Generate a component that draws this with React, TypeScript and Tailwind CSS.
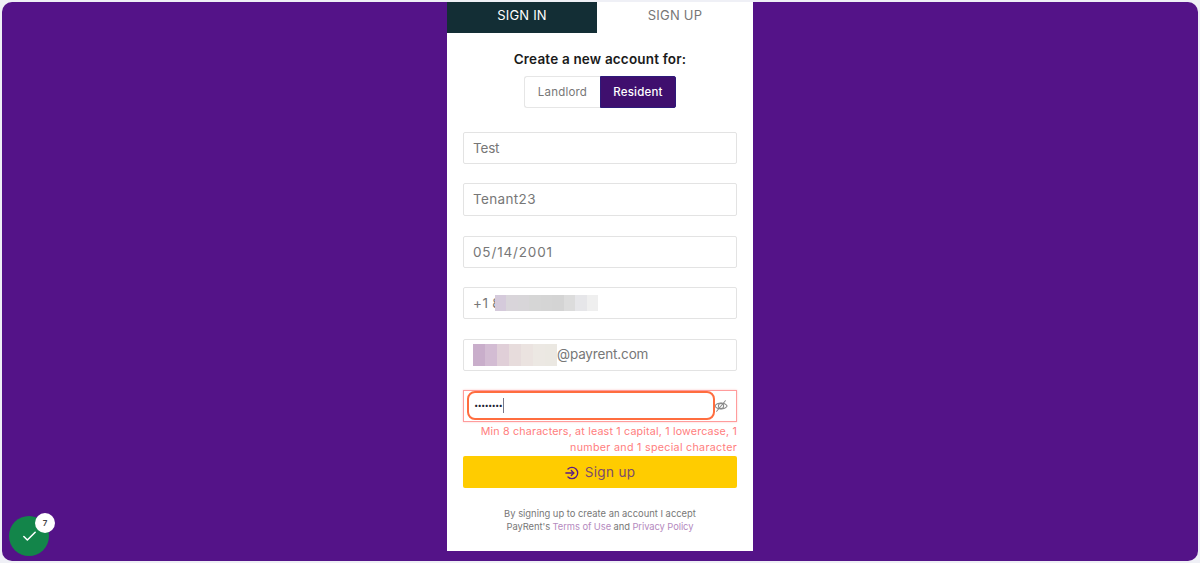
import { Check } from 'lucide-react'

const phoneBlur = ['#d5cadb', '#d9d5da', '#d8d6d9', '#d6d6d6', '#d5d5d5', '#d4d4d4', '#dcdcdc', '#e6e6e9', '#efefef']
const mailBlur = ['#c9aecb', '#d3bcd3', '#e0cfd8', '#e7dcdc', '#ebe3e0', '#ece8e3', '#ebe8e2']

function Field({ className = '', children }: { className?: string; children: React.ReactNode }) {
  return (
    <div className={`flex h-[32px] items-center rounded-[2px] border border-[#e3e3e3] px-[9px] text-[13.5px] text-[#777] ${className}`}>
      {children}
    </div>
  )
}

function SignInIcon() {
  return (
    <svg width="14" height="14" viewBox="0 0 16 16" fill="none" stroke="#5b1a88" strokeWidth="1.5" strokeLinecap="round" strokeLinejoin="round">
      <path d="M3.4 3.4A6.5 6.5 0 1 1 3.4 12.6" />
      <path d="M1 8h9" />
      <path d="M7.2 5.2 10 8l-2.8 2.8" />
    </svg>
  )
}

function EyeSlashIcon() {
  return (
    <svg width="14" height="14" viewBox="0 0 16 16" fill="none" stroke="#8a8a8a" strokeWidth="1.2" strokeLinecap="round">
      <path d="M1 8C4 3.4 12 3.4 15 8C12 12.6 4 12.6 1 8Z" />
      <circle cx="8" cy="8" r="3" />
      <path d="M3 14 13 2" />
    </svg>
  )
}

export default function App() {
  return (
    <div className="relative h-[563px] w-[1200px] overflow-hidden bg-[#eff0f6] font-['Inter',sans-serif]">
      <div className="mx-[2px] mt-[2px] flex h-[559px] justify-center rounded-[10px] bg-[#541388]">
        <div className="flex h-[549px] w-[306px] flex-col bg-white">
          <div className="flex h-[31px] text-[13px] tracking-[0.2px]">
            <div className="flex w-[150px] items-center justify-center bg-[#132e35] pb-[4px] text-white">SIGN IN</div>
            <div className="flex flex-1 items-center justify-center pb-[4px] text-[#777]">SIGN UP</div>
          </div>

          <div className="mt-[17px] text-center text-[13.5px] font-semibold leading-[18px] tracking-[0.18px] text-[#1a1a1a]">Create a new account for:</div>

          <div className="mx-auto mt-[8px] flex h-[32px] w-[152px] text-[11.5px] tracking-[0.2px]">
            <div className="flex w-[76px] items-center justify-center rounded-l-[3px] border border-r-0 border-[#e6e6e6] pt-[1px] text-[#777]">Landlord</div>
            <div className="flex w-[76px] items-center justify-center rounded-r-[2px] border border-[#2d1a7a] bg-[#3f0f6e] pt-[1px] font-medium text-white">Resident</div>
          </div>

          <div className="mx-[16px] mt-[24px] flex flex-col">
            <Field className="tracking-[-0.2px]">Test</Field>
            <Field className="mt-[19px] h-[33px] tracking-[0.35px]">Tenant23</Field>
            <Field className="mt-[20px] tracking-[0.85px]">05/14/2001</Field>
            <Field className="mt-[19px] tracking-[0.45px]">
              <span>+1</span>
              <span className="ml-[4px]">8</span>
              <span className="relative ml-[-6.5px] flex h-[16px]">
                {phoneBlur.map((c, i) => (
                  <span key={i} className="h-full w-[11.5px]" style={{ backgroundColor: c }} />
                ))}
              </span>
            </Field>
            <Field className="mt-[20px] tracking-[-0.15px]">
              <span className="flex h-[22px]">
                {mailBlur.map((c, i) => (
                  <span key={i} className="h-full w-[12px]" style={{ backgroundColor: c }} />
                ))}
              </span>
              <span className="pb-[1px]">@payrent.com</span>
            </Field>

            <div className="relative mt-[19px] flex h-[32px] items-center justify-end border border-[#ff9c9c] pr-[8px] shadow-[0_0_2px_#ffc9c9]">
              <EyeSlashIcon />
              <div className="absolute left-[3px] top-[0px] flex h-[29px] w-[248px] items-center rounded-[8px] border-2 border-[#ff6d3f] bg-white pl-[5px] text-[13px] font-bold tracking-[-0.85px] text-[#223]">
                ········
                <span className="ml-[1px] h-[15px] w-[1px] bg-[#778]" />
              </div>
            </div>

            <div className="mt-[2px] text-right text-[10.7px] leading-[16px] text-[#ff7d7d]">
              <div className="tracking-[0.18px]">Min 8 characters, at least 1 capital, 1 lowercase, 1</div>
              <div className="tracking-[0.3px]">number and 1 special character</div>
            </div>

            <div className="flex h-[32px] items-center justify-center gap-[6px] rounded-[2px] bg-[#ffcc00] pt-[1px] text-[13.5px] tracking-[0.35px] text-[#7b4a6c]">
              <SignInIcon />
              Sign up
            </div>

            <div className="mt-[19px] text-center text-[9.4px] leading-[13px] text-[#777]">
              <div>By signing up to create an account I accept</div>
              <div className="tracking-[-0.08px]">
                PayRent's <span className="text-[#b58ac0]">Terms of Use</span> and <span className="text-[#b58ac0]">Privacy Policy</span>
              </div>
            </div>
          </div>
        </div>
      </div>

      <div className="absolute left-[9px] top-[516px] flex h-[40px] w-[40px] items-center justify-center rounded-full bg-[#13854a]">
        <Check size={17} strokeWidth={2.2} className="text-white" />
      </div>
      <div className="absolute left-[35px] top-[513px] flex h-[20px] w-[20px] items-center justify-center rounded-full bg-white text-[8px] font-semibold text-[#444]">7</div>
    </div>
  )
}
